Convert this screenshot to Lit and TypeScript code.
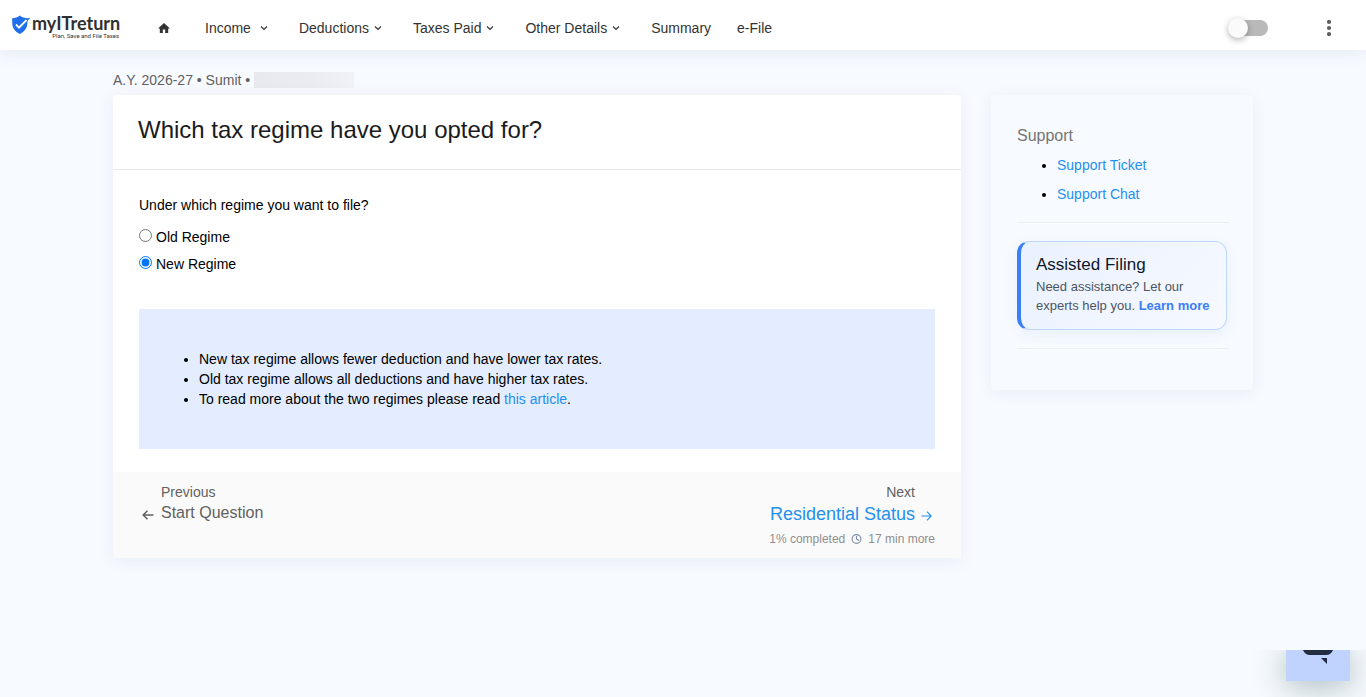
import { LitElement, html, css, svg } from "lit";
import { customElement, state } from "lit/decorators.js";

const chevron = svg`<path d="M1 1.5 4 4.5 7 1.5" fill="none" stroke="currentColor" stroke-width="1.2"/>`;

@customElement("app-header")
export class AppHeader extends LitElement {
  static styles = css`
    :host {
      display: flex;
      align-items: center;
      height: 50px;
      padding: 0 32px 0 12px;
      background: #fff;
      box-shadow: 0 2px 18px rgba(60, 80, 120, 0.1);
      position: relative;
      box-sizing: border-box;
    }
    .logo {
      display: block;
      height: 28px;
      margin-right: 31px;
    }
    .logo svg,
    .home svg {
      display: block;
    }
    nav {
      display: flex;
      align-items: center;
      flex: 1;
      padding-top: 6px;
    }
    .home {
      display: flex;
      padding: 0 5px;
      margin-right: 30px;
      color: #333;
    }
    .item {
      display: flex;
      align-items: center;
      gap: 5px;
      margin: 0 26px 0 0;
      padding: 0;
      border: 0;
      background: none;
      color: #333;
      font: 14px/20px "Liberation Sans", Arial, sans-serif;
      text-decoration: none;
      cursor: pointer;
    }
    .menu {
      margin-right: 31px;
    }
    .wide {
      gap: 9px;
    }
    .switch {
      appearance: none;
      position: relative;
      width: 34px;
      height: 16px;
      margin: 6px 56px 0 0;
      border-radius: 8px;
      background: #b9b9b9;
      cursor: pointer;
    }
    .switch::before {
      content: "";
      position: absolute;
      left: -6px;
      top: -2px;
      width: 20px;
      height: 20px;
      border-radius: 50%;
      background: #fafafa;
      box-shadow: 0 2px 6px rgba(0, 0, 0, 0.3);
    }
    .switch:checked::before {
      left: 18px;
    }
    .more {
      display: flex;
      margin: 6px 0 0;
      padding: 0;
      border: 0;
      background: none;
      cursor: pointer;
    }
  `;

  render() {
    const menus = ["Income", "Deductions", "Taxes Paid", "Other Details"];
    return html`
      <a class="logo" href="#" aria-label="myITreturn">
        <svg width="110" height="28" viewBox="0 0 110 28">
          <path d="M7.800 4.600C5.500 6.400 3 7.200 0.200 7.300V12C0.300 17 3 20.800 7.800 23C12.600 20.800 15.300 17 15.400 12V7.300C12.600 7.200 10 6.400 7.800 4.600Z" fill="#1f6feb"/>
          <path d="M4 13.500 7 16.600 15 8.600" fill="none" stroke="#fff" stroke-width="1.900"/>
          <path d="M13.800 7.700 18.300 6.800 15.400 10.300" fill="#1f6feb"/>
          <text x="20" y="19" font-family="Lato, sans-serif" font-size="18" font-weight="700" fill="#303030">myITreturn</text>
          <text x="107" y="27" text-anchor="end" font-family="Roboto, sans-serif" font-size="6" fill="#333">Plan, Save and File Taxes</text>
        </svg>
      </a>
      <nav>
        <a class="home" href="#" aria-label="Home">
          <svg width="12" height="10" viewBox="0 0 12 10"><path d="M6 0 0 5.400H1.800V10H4.800V6.600H7.200V10H10.200V5.400H12Z" fill="currentColor"/></svg>
        </a>
        ${menus.map(
          (m, i) => html`<button class="item menu ${i === 0 ? "wide" : ""}">
            ${m}<svg width="8" height="6" viewBox="0 0 8 6">${chevron}</svg>
          </button>`
        )}
        <a class="item" href="#">Summary</a>
        <a class="item" href="#">e-File</a>
      </nav>
      <input class="switch" type="checkbox" role="switch" aria-label="Toggle view" />
      <button class="more" aria-label="More options">
        <svg width="10" height="16" viewBox="0 0 10 16" fill="#5a5d61"><circle cx="5" cy="2" r="2.100"/><circle cx="5" cy="8" r="2.100"/><circle cx="5" cy="14" r="2.100"/></svg>
      </button>
    `;
  }
}

@customElement("support-panel")
export class SupportPanel extends LitElement {
  static styles = css`
    :host {
      display: block;
      box-sizing: border-box;
      padding: 31px 24px 41px 26px;
      border-radius: 4px;
      background: #f7faff;
      box-shadow: 0 3px 16px rgba(60, 80, 110, 0.07);
    }
    h2 {
      margin: 0;
      font-size: 16px;
      line-height: 20px;
      font-weight: 400;
      color: #757575;
    }
    ul {
      margin: 5px 0 0;
      padding-left: 40px;
      line-height: 29px;
      color: #000;
    }
    a {
      color: #2390ef;
      text-decoration: none;
    }
    hr {
      margin: 13px 0 18px;
      border: 0;
      border-top: 1px solid #eceff1;
    }
    .assist {
      margin-right: 2px;
      padding: 13px 12px 14px 15px;
      border: 1px solid #bfd6fb;
      border-left: 4px solid #3b7ff5;
      border-radius: 12px;
      background: linear-gradient(135deg, #eaf1ff, #f6f9ff);
      box-shadow: 0 4px 14px rgba(59, 127, 245, 0.08);
    }
    h3 {
      margin: 0 0 3px;
      font-size: 17px;
      line-height: 19px;
      font-weight: 400;
      color: #0f172a;
    }
    p {
      margin: 0;
      font-size: 13px;
      line-height: 19px;
      color: #4b5563;
    }
    p a {
      color: #3b7df6;
      font-weight: 700;
    }
    .last {
      margin-bottom: 0;
      margin-top: 18px;
    }
  `;

  render() {
    return html`
      <h2>Support</h2>
      <ul>
        <li><a href="#">Support Ticket</a></li>
        <li><a href="#">Support Chat</a></li>
      </ul>
      <hr />
      <section class="assist">
        <h3>Assisted Filing</h3>
        <p>Need assistance? Let our experts help you. <a href="#">Learn more</a></p>
      </section>
      <hr class="last" />
    `;
  }
}

@customElement("regime-card")
export class RegimeCard extends LitElement {
  @state() private regime = "new";

  static styles = css`
    :host {
      display: block;
      border-radius: 4px 4px 0 0;
      background: #fff;
      box-shadow: 0 3px 18px rgba(60, 80, 110, 0.08);
    }
    header {
      padding: 20px 25px 24px;
      border-bottom: 1px solid #e6e8ea;
    }
    h1 {
      margin: 0;
      font-size: 24px;
      line-height: 30px;
      font-weight: 400;
      color: #1b1b1b;
    }
    .body {
      padding: 25px 26px 23px;
      color: #000;
    }
    fieldset {
      margin: 0;
      padding: 0;
      border: 0;
    }
    legend {
      padding: 0;
      margin-bottom: 9px;
      line-height: 20px;
    }
    label {
      display: flex;
      gap: 4px;
      line-height: 27px;
    }
    input {
      width: 13px;
      height: 13px;
      margin: 5px 0 0;
      accent-color: #0075ff;
    }
    ul {
      margin: 31px 0 0;
      padding: 40px 60px;
      line-height: 20px;
      background: #e3edff;
    }
    a {
      color: #2390ef;
      text-decoration: none;
    }
    footer {
      display: flex;
      justify-content: space-between;
      padding: 10px 26px 9px;
      background: #fafafa;
      color: #616161;
    }
    .step {
      display: grid;
      column-gap: 4px;
      line-height: 20px;
    }
    .step svg {
      align-self: center;
      justify-self: center;
      margin-top: 4px;
    }
    .prev {
      grid-template-columns: 18px auto;
      align-content: start;
      color: #616161;
    }
    .next {
      grid-template-columns: 1fr 14px;
      column-gap: 6px;
      text-align: right;
    }
    .caption {
      color: #616161;
    }
    .prev .caption {
      grid-column: 2;
    }
    .next .caption {
      grid-column: 1 / 2;
    }
    .next .name {
      grid-column: 1 / 2;
      grid-row: 2;
    }
    .next svg {
      grid-column: 2;
      grid-row: 2;
      justify-self: start;
    }
    .name {
      font-size: 16px;
      line-height: 22px;
    }
    .next .name {
      font-size: 18px;
      line-height: 24px;
      white-space: nowrap;
    }
    .progress {
      display: flex;
      align-items: center;
      justify-content: flex-end;
      gap: 6px;
      margin-top: 3px;
      font-size: 12px;
      line-height: 20px;
      color: #8f8f8f;
    }
  `;

  private option(value: string, text: string) {
    return html`<label>
      <input type="radio" name="regime" value=${value} .checked=${this.regime === value}
        @change=${() => (this.regime = value)} />${text}</label>`;
  }

  render() {
    return html`
      <header><h1>Which tax regime have you opted for?</h1></header>
      <div class="body">
        <fieldset>
          <legend>Under which regime you want to file?</legend>
          ${this.option("old", "Old Regime")} ${this.option("new", "New Regime")}
        </fieldset>
        <ul>
          <li>New tax regime allows fewer deduction and have lower tax rates.</li>
          <li>Old tax regime allows all deductions and have higher tax rates.</li>
          <li>To read more about the two regimes please read <a href="#">this article</a>.</li>
        </ul>
      </div>
      <footer>
        <a class="step prev" href="#">
          <span class="caption">Previous</span>
          <svg width="12" height="10" viewBox="0 0 12 10" fill="none" stroke="currentColor" stroke-width="1.500"><path d="M11.500 5H1.300M5.500 0.700 1.200 5 5.500 9.300"/></svg>
          <span class="name">Start Question</span>
        </a>
        <div>
          <a class="step next" href="#">
            <span class="caption">Next</span>
            <span class="name">Residential Status</span>
            <svg width="11" height="10" viewBox="0 0 11 10" fill="none" stroke="currentColor" stroke-width="1.100"><path d="M0.500 5H10M6 0.700 10.200 5 6 9.300"/></svg>
          </a>
          <div class="progress">
            <span>1% completed</span>
            <svg width="11" height="10" viewBox="0 0 11 10" fill="none" stroke="#7f8ea3" stroke-width="1.100"><circle cx="5.500" cy="5" r="4.400"/><path d="M5.500 2V5L8 6.500"/></svg>
            <span>17 min more</span>
          </div>
        </div>
      </footer>
    `;
  }
}

@customElement("app-root")
export class AppRoot extends LitElement {
  static styles = css`
    :host {
      display: block;
      min-height: 100vh;
      background: #f7faff;
      font: 14px/20px "Liberation Sans", Arial, sans-serif;
    }
    main {
      max-width: 1140px;
      margin: 0 auto;
      padding: 20px 16px;
    }
    .crumbs {
      display: flex;
      align-items: center;
      gap: 4px;
      margin-bottom: 5px;
      color: #616161;
    }
    .masked {
      width: 100px;
      height: 16px;
      background: linear-gradient(90deg, #e8e9ee, #ebecf1 60%, #f0f2f7);
    }
    .columns {
      display: grid;
      grid-template-columns: minmax(0, 1fr) 262px;
      gap: 30px;
      align-items: start;
    }
    .chat {
      position: fixed;
      right: 0;
      bottom: 0;
      box-sizing: border-box;
      width: 120px;
      height: 47px;
      padding: 0 16px 16px 40px;
      overflow: hidden;
    }
    .launcher {
      display: flex;
      justify-content: center;
      width: 64px;
      height: 31px;
      margin: 0;
      padding: 0;
      border: 0;
      background: #bfd3fe;
      box-shadow: 0 4px 32px rgba(30, 70, 60, 0.38);
      cursor: pointer;
    }
  `;

  render() {
    return html`
      <app-header></app-header>
      <main>
        <div class="crumbs"><span>A.Y. 2026-27 • Sumit •</span><span class="masked"></span></div>
        <div class="columns">
          <regime-card></regime-card>
          <support-panel></support-panel>
        </div>
      </main>
      <div class="chat">
        <button class="launcher" aria-label="Open chat">
          <svg width="32" height="16" viewBox="0 0 32 16" fill="#222d44"><path d="M1 0H31C29.500 3.500 27.500 5 24 5H8C4.500 5 2.500 3.500 1 0ZM19 8H25V14Z"/></svg>
        </button>
      </div>
    `;
  }
}
